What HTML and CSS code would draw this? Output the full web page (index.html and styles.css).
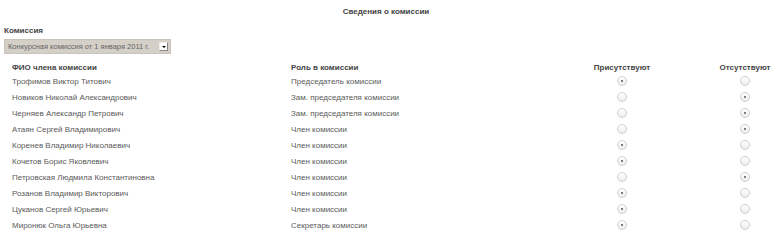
FILE: index.html
```html
<!DOCTYPE html>
<html lang="ru">
<head>
    <meta charset="UTF-8">
    <title>Сведения о комиссии</title>
    <link rel="stylesheet" href="styles.css">
</head>
<body>
    <div class="page">
        <h1 class="title">Сведения о комиссии</h1>

        <div class="field-label">Комиссия</div>
        <div class="select-box">
            <span class="select-text">Конкурсная комиссия от 1 января 2011 г.</span>
            <span class="select-btn"><span class="arrow"></span></span>
        </div>

        <div class="members">
            <div class="row head">
                <div class="c-name">ФИО члена комиссии</div>
                <div class="c-role">Роль в комиссии</div>
                <div class="c-radio">Присутствуют</div>
                <div class="c-radio">Отсутствуют</div>
            </div>
            <div class="row">
                <div class="c-name">Трофимов Виктор Титович</div>
                <div class="c-role">Председатель комиссии</div>
                <div class="c-radio"><span class="radio on"></span></div>
                <div class="c-radio"><span class="radio"></span></div>
            </div>
            <div class="row">
                <div class="c-name">Новиков Николай Александрович</div>
                <div class="c-role">Зам. председателя комиссии</div>
                <div class="c-radio"><span class="radio"></span></div>
                <div class="c-radio"><span class="radio on"></span></div>
            </div>
            <div class="row">
                <div class="c-name">Черняев Александр Петрович</div>
                <div class="c-role">Зам. председателя комиссии</div>
                <div class="c-radio"><span class="radio"></span></div>
                <div class="c-radio"><span class="radio on"></span></div>
            </div>
            <div class="row">
                <div class="c-name">Атаян Сергей Владимирович</div>
                <div class="c-role">Член комиссии</div>
                <div class="c-radio"><span class="radio"></span></div>
                <div class="c-radio"><span class="radio on"></span></div>
            </div>
            <div class="row">
                <div class="c-name">Коренев Владимир Николаевич</div>
                <div class="c-role">Член комиссии</div>
                <div class="c-radio"><span class="radio on"></span></div>
                <div class="c-radio"><span class="radio"></span></div>
            </div>
            <div class="row">
                <div class="c-name">Кочетов Борис Яковлевич</div>
                <div class="c-role">Член комиссии</div>
                <div class="c-radio"><span class="radio on"></span></div>
                <div class="c-radio"><span class="radio"></span></div>
            </div>
            <div class="row">
                <div class="c-name">Петровская Людмила Константиновна</div>
                <div class="c-role">Член комиссии</div>
                <div class="c-radio"><span class="radio"></span></div>
                <div class="c-radio"><span class="radio on"></span></div>
            </div>
            <div class="row">
                <div class="c-name">Розанов Владимир Викторович</div>
                <div class="c-role">Член комиссии</div>
                <div class="c-radio"><span class="radio on"></span></div>
                <div class="c-radio"><span class="radio"></span></div>
            </div>
            <div class="row">
                <div class="c-name">Цуканов Сергей Юрьевич</div>
                <div class="c-role">Член комиссии</div>
                <div class="c-radio"><span class="radio on"></span></div>
                <div class="c-radio"><span class="radio"></span></div>
            </div>
            <div class="row">
                <div class="c-name">Миронюк Ольга Юрьевна</div>
                <div class="c-role">Секретарь комиссии</div>
                <div class="c-radio"><span class="radio on"></span></div>
                <div class="c-radio"><span class="radio"></span></div>
            </div>
        </div>
    </div>
</body>
</html>
```

FILE: styles.css
```css
body {
    margin: 0;
    background: #fff;
    font-family: 'Liberation Sans', Arial, sans-serif;
    font-size: 8px;
    color: #5a5a5a;
}
.page {
    padding: 4px 4px 0 4px;
}
.title {
    margin: 0;
    padding-right: 8px;
    font-size: 8px;
    line-height: 16px;
    font-weight: bold;
    color: #444;
    text-align: center;
}
.field-label {
    margin-top: 6px;
    line-height: 10px;
    font-weight: bold;
    color: #444;
}
.select-box {
    margin-top: 3px;
    width: 165px;
    height: 13px;
    background: #d4d0c8;
    border: 1px solid #c8c4bc;
    display: flex;
    align-items: center;
}
.select-text {
    flex: 1;
    padding-left: 3px;
    font-size: 7.5px;
    color: #666;
    white-space: nowrap;
}
.select-btn {
    flex-shrink: 0;
    width: 7px;
    height: 7px;
    margin-right: 2px;
    background: #fff;
    border: 1px solid #888;
    border-top-color: #eee;
    border-left-color: #eee;
    display: flex;
    align-items: center;
    justify-content: center;
}
.arrow {
    width: 0;
    height: 0;
    border-left: 2px solid transparent;
    border-right: 2px solid transparent;
    border-top: 2px solid #000;
}
.members {
    margin-top: 7px;
}
.row {
    display: grid;
    grid-template-columns: 287px 243px 176px 70px;
    height: 16px;
    align-items: center;
}
.row.head {
    height: 12px;
    font-weight: bold;
    color: #444;
}
.c-name {
    padding-left: 8px;
}
.c-radio {
    display: flex;
    justify-content: center;
}
.radio {
    width: 8px;
    height: 8px;
    border-radius: 50%;
    border: 1px solid #cfcfcf;
    background: linear-gradient(#fff, #ebebeb);
    display: flex;
    align-items: center;
    justify-content: center;
}
.radio.on::after {
    content: "";
    width: 2px;
    height: 2px;
    border-radius: 50%;
    background: #555;
}
```
